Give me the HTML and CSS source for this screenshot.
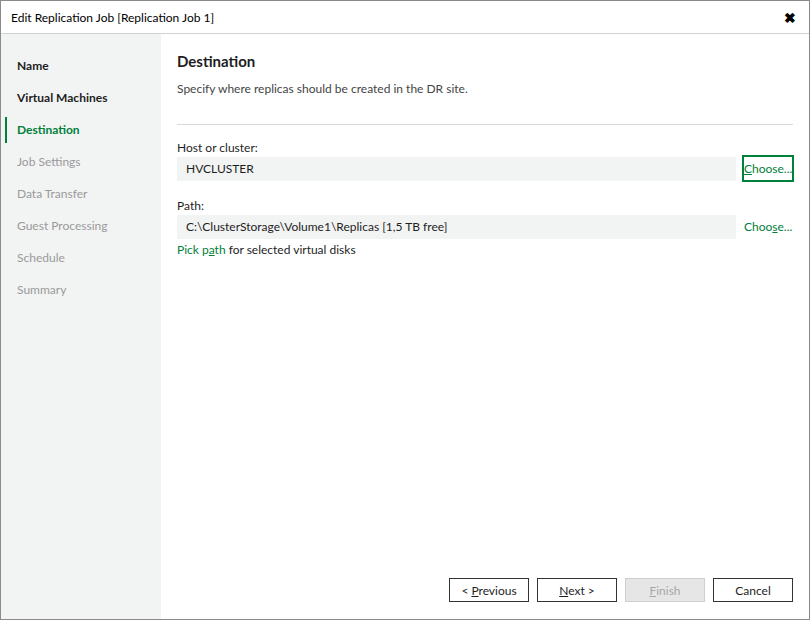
FILE: index.html
```html
<!DOCTYPE html>
<html lang="en">
<head>
    <meta charset="UTF-8">
    <title>Edit Replication Job</title>
    <link rel="stylesheet" href="styles.css">
</head>
<body>
    <div class="window">
        <div class="titlebar">
            <span class="title">Edit Replication Job [Replication Job 1]</span>
            <span class="close">&#10006;</span>
        </div>
        <div class="main">
            <div class="sidebar">
                <div class="step done">Name</div>
                <div class="step done">Virtual Machines</div>
                <div class="step current">Destination</div>
                <div class="step">Job Settings</div>
                <div class="step">Data Transfer</div>
                <div class="step">Guest Processing</div>
                <div class="step">Schedule</div>
                <div class="step">Summary</div>
            </div>
            <div class="content">
                <h2>Destination</h2>
                <p class="desc">Specify where replicas should be created in the DR site.</p>
                <div class="separator"></div>

                <div class="label">Host or cluster:</div>
                <div class="row">
                    <div class="field">HVCLUSTER</div>
                    <span class="link-btn focused"><u>C</u>hoose...</span>
                </div>

                <div class="label">Path:</div>
                <div class="row">
                    <div class="field">C:\ClusterStorage\Volume1\Replicas [1,5 TB free]</div>
                    <span class="link-btn">Choo<u>s</u>e...</span>
                </div>
                <div class="hint"><span class="green">Pick p<u>a</u>th</span> for selected virtual disks</div>

                <div class="buttons">
                    <button class="btn">&lt; <u>P</u>revious</button>
                    <button class="btn"><u>N</u>ext &gt;</button>
                    <button class="btn" disabled><u>F</u>inish</button>
                    <button class="btn">Cancel</button>
                </div>
            </div>
        </div>
    </div>
</body>
</html>
```

FILE: styles.css
```css
body {
    margin: 0;
    font-family: Lato, "Liberation Sans", sans-serif;
    font-size: 12px;
    color: #1e1e1e;
}
.window {
    width: 810px;
    height: 620px;
    box-sizing: border-box;
    border: 1px solid #8a8a8a;
    background-color: #fff;
    display: flex;
    flex-direction: column;
}
.titlebar {
    height: 32px;
    border-bottom: 1px solid #d2d2d2;
    display: flex;
    align-items: center;
    justify-content: space-between;
    padding: 0 13px 0 10px;
}
.title {
    font-size: 12px;
    color: #000;
}
.close {
    font-size: 14px;
    font-weight: bold;
    color: #000;
}
.main {
    flex: 1;
    display: flex;
}
.sidebar {
    width: 160px;
    background-color: #f2f3f3;
    padding-top: 16px;
}
.step {
    height: 32px;
    line-height: 32px;
    padding-left: 16px;
    color: #9a9a9a;
    font-size: 12px;
}
.step.done {
    color: #1e1e1e;
    font-weight: bold;
}
.step.current {
    color: #00803a;
    font-weight: bold;
    border-left: 2px solid #00803a;
    margin-left: 4px;
    padding-left: 10px;
    height: 26px;
    line-height: 26px;
    margin-top: 3px;
    margin-bottom: 3px;
}
.content {
    flex: 1;
    padding: 16px 15px 17px 16px;
    display: flex;
    flex-direction: column;
}
h2 {
    margin: 0;
    font-size: 15px;
    font-weight: bold;
    color: #1e1e1e;
    line-height: 22px;
}
.desc {
    margin: 9px 0 0 0;
    color: #444;
    line-height: 16px;
}
.separator {
    height: 1px;
    background-color: #d8d8d8;
    margin: 27px 1px 14px 0;
}
.label {
    line-height: 18px;
    color: #1e1e1e;
}
.row {
    display: flex;
    align-items: flex-start;
    height: 24px;
}
.field {
    flex: 1;
    height: 24px;
    line-height: 24px;
    background-color: #f2f3f3;
    padding-left: 9px;
    color: #1e1e1e;
}
.link-btn {
    margin: -2px 0 0 6px;
    width: 52px;
    height: 27px;
    line-height: 23px;
    box-sizing: border-box;
    border: 2px solid transparent;
    color: #00803a;
    text-align: center;
    font-size: 12px;
}
.link-btn.focused {
    border-color: #00803a;
}
.row + .label {
    margin-top: 16px;
}
.hint {
    margin-top: 3px;
    line-height: 16px;
}
.green {
    color: #00803a;
}
.buttons {
    margin-top: auto;
    margin-right: 1px;
    display: flex;
    justify-content: flex-end;
    gap: 8px;
}
.btn {
    width: 80px;
    height: 24px;
    background-color: #fff;
    border: 1px solid #333;
    font-family: inherit;
    font-size: 12px;
    color: #1e1e1e;
    padding: 0;
}
.btn:disabled {
    background-color: #e6e6e6;
    border-color: #cfcfcf;
    color: #a8a8a8;
}
```
